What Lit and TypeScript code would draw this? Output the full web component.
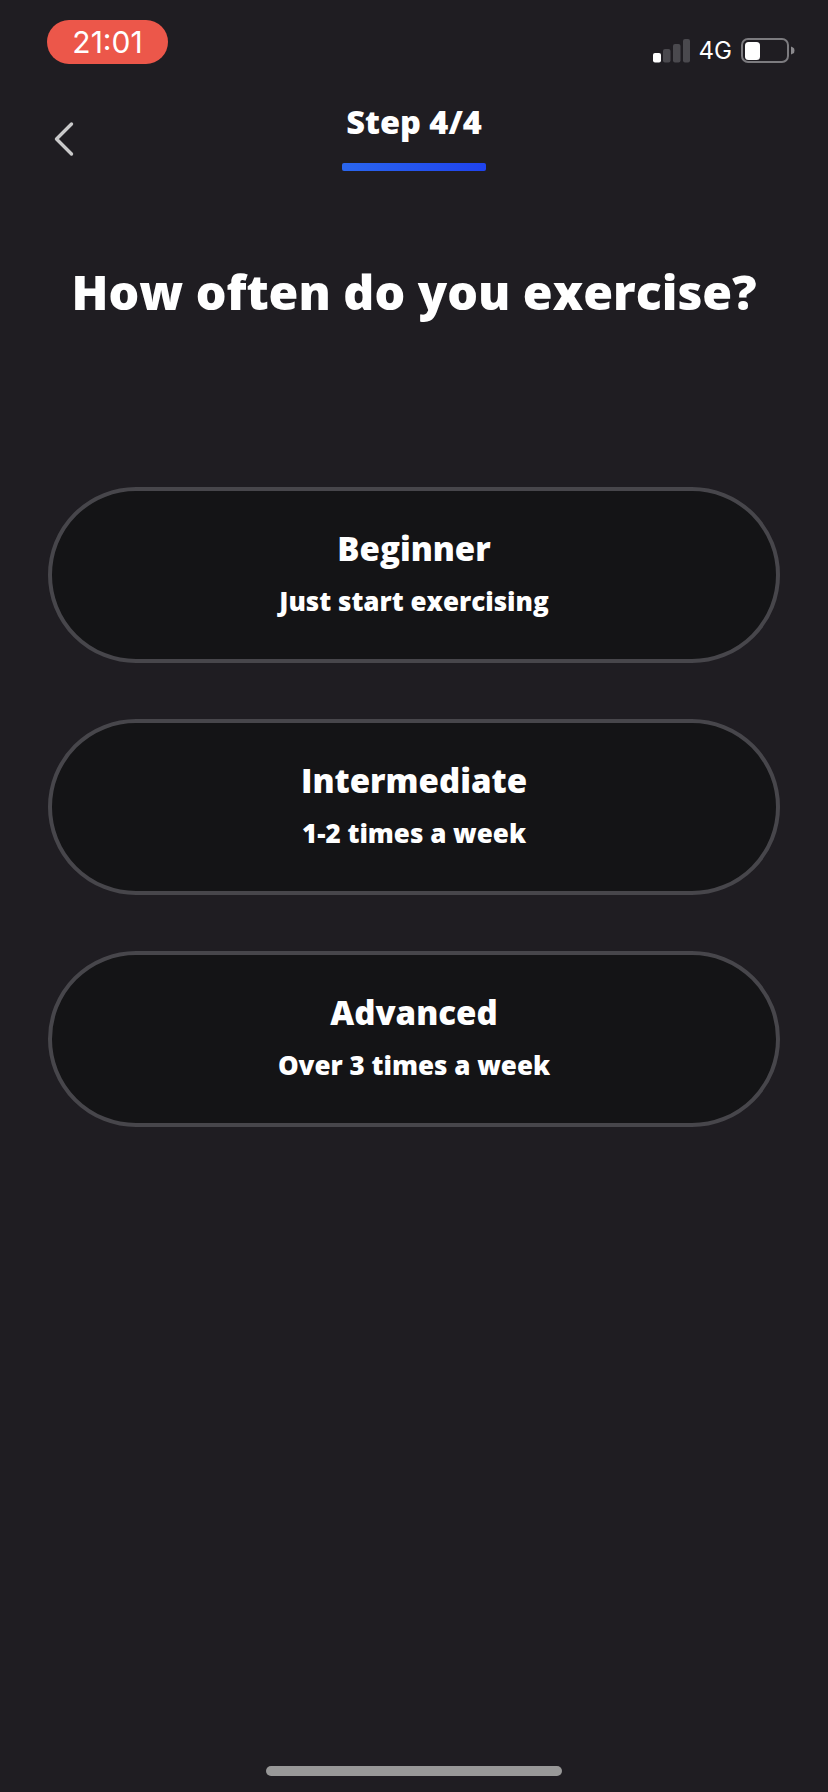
import { LitElement, html, css } from "lit";
import { customElement } from "lit/decorators.js";

const LEVELS = [
  { name: "Beginner", note: "Just start exercising" },
  { name: "Intermediate", note: "1-2 times a week" },
  { name: "Advanced", note: "Over 3 times a week" },
];

@customElement("app-root")
export class AppRoot extends LitElement {
  static styles = css`
    :host {
      display: block;
      width: 828px;
      height: 1792px;
      background: #1f1d22;
      color: #fff;
      font-family: "Open Sans", "Liberation Sans", sans-serif;
    }
    .page {
      height: 1792px;
      display: flex;
      flex-direction: column;
      box-sizing: border-box;
    }
    .status {
      height: 84px;
      flex: none;
      box-sizing: border-box;
      padding: 20px 33px 0 47px;
      display: flex;
      justify-content: space-between;
      align-items: flex-start;
    }
    .time {
      width: 121px;
      height: 44px;
      border-radius: 22px;
      background: #ec574a;
      font-family: "Inter", "Liberation Sans", sans-serif;
      font-size: 30px;
      font-weight: 400;
      line-height: 44px;
      text-align: center;
    }
    .indicators {
      margin-top: 17px;
      display: flex;
      align-items: center;
      gap: 9px;
      height: 27px;
    }
    .signal { display: block; }
    .net {
      font-family: "Inter", "Liberation Sans", sans-serif;
      font-size: 24px;
      line-height: 27px;
    }
    .battery { display: block; }
    .nav {
      flex: none;
      display: grid;
      grid-template-columns: 1fr auto 1fr;
      height: 110px;
    }
    .back {
      padding: 37px 0 0 53px;
    }
    .back svg { display: block; }
    .step {
      display: flex;
      flex-direction: column;
      align-items: center;
    }
    .step-label {
      font-size: 32.5px;
      font-weight: 800;
      line-height: 40px;
      margin-top: 18px;
    }
    .bar {
      width: 144px;
      height: 8px;
      border-radius: 2px;
      margin-top: 21px;
      background: linear-gradient(90deg, #2a66ee, #1f43ee);
    }
    .title {
      flex: none;
      margin: 0;
      height: 293px;
      padding-top: 66px;
      box-sizing: border-box;
      text-align: center;
      font-size: 48.3px;
      font-weight: 800;
      line-height: 62px;
    }
    .cards {
      flex: none;
      display: flex;
      flex-direction: column;
      gap: 56px;
      padding: 0 48px;
    }
    .card {
      height: 176px;
      box-sizing: border-box;
      border: 4px solid #47464b;
      border-radius: 88px;
      background: #141416;
      padding-bottom: 4px;
      display: flex;
      flex-direction: column;
      align-items: center;
      justify-content: center;
    }
    .name {
      font-size: 33px;
      font-weight: 800;
      line-height: 44px;
    }
    .note {
      margin-top: 12px;
      font-size: 26px;
      font-weight: 800;
      line-height: 36px;
    }
    .home {
      margin: auto auto 16px;
      width: 296px;
      height: 10px;
      border-radius: 5px;
      background: #989898;
      flex: none;
    }
  `;

  render() {
    return html`
      <div class="page">
        <div class="status">
          <div class="time">21:01</div>
          <div class="indicators">
            <svg class="signal" width="37" height="24" viewBox="0 0 37 24">
              <rect x="0" y="14" width="8" height="9.5" rx="2" fill="#fff"></rect>
              <rect x="10" y="10" width="7.5" height="13.5" rx="2" fill="#4a494e"></rect>
              <rect x="20" y="5" width="7.5" height="18.5" rx="2" fill="#4a494e"></rect>
              <rect x="30" y="0" width="7" height="23.5" rx="2" fill="#4a494e"></rect>
            </svg>
            <span class="net">4G</span>
            <svg class="battery" width="54" height="26" viewBox="0 0 54 26">
              <rect x="1" y="1" width="46" height="23" rx="6" fill="none" stroke="#7c7b7f" stroke-width="2"></rect>
              <rect x="4" y="4" width="15" height="18" rx="3.5" fill="#fff"></rect>
              <path d="M50 8.500 L52 9.500 Q53.500 10 53.500 12.500 Q53.500 15 52 15.500 L50 16.500 Z" fill="#8a898d"></path>
            </svg>
          </div>
        </div>
        <div class="nav">
          <div class="back">
            <svg width="21" height="36" viewBox="0 0 21 36">
              <path d="M18.500 3 L3.500 18 L18.500 33" fill="none" stroke="#c9c9ca" stroke-width="3.400" stroke-linecap="round" stroke-linejoin="round"></path>
            </svg>
          </div>
          <div class="step">
            <div class="step-label">Step 4/4</div>
            <div class="bar"></div>
          </div>
          <div></div>
        </div>
        <h1 class="title">How often do you exercise?</h1>
        <div class="cards">
          ${LEVELS.map(
            (l) => html`
              <div class="card">
                <div class="name">${l.name}</div>
                <div class="note">${l.note}</div>
              </div>
            `
          )}
        </div>
        <div class="home"></div>
      </div>
    `;
  }
}
